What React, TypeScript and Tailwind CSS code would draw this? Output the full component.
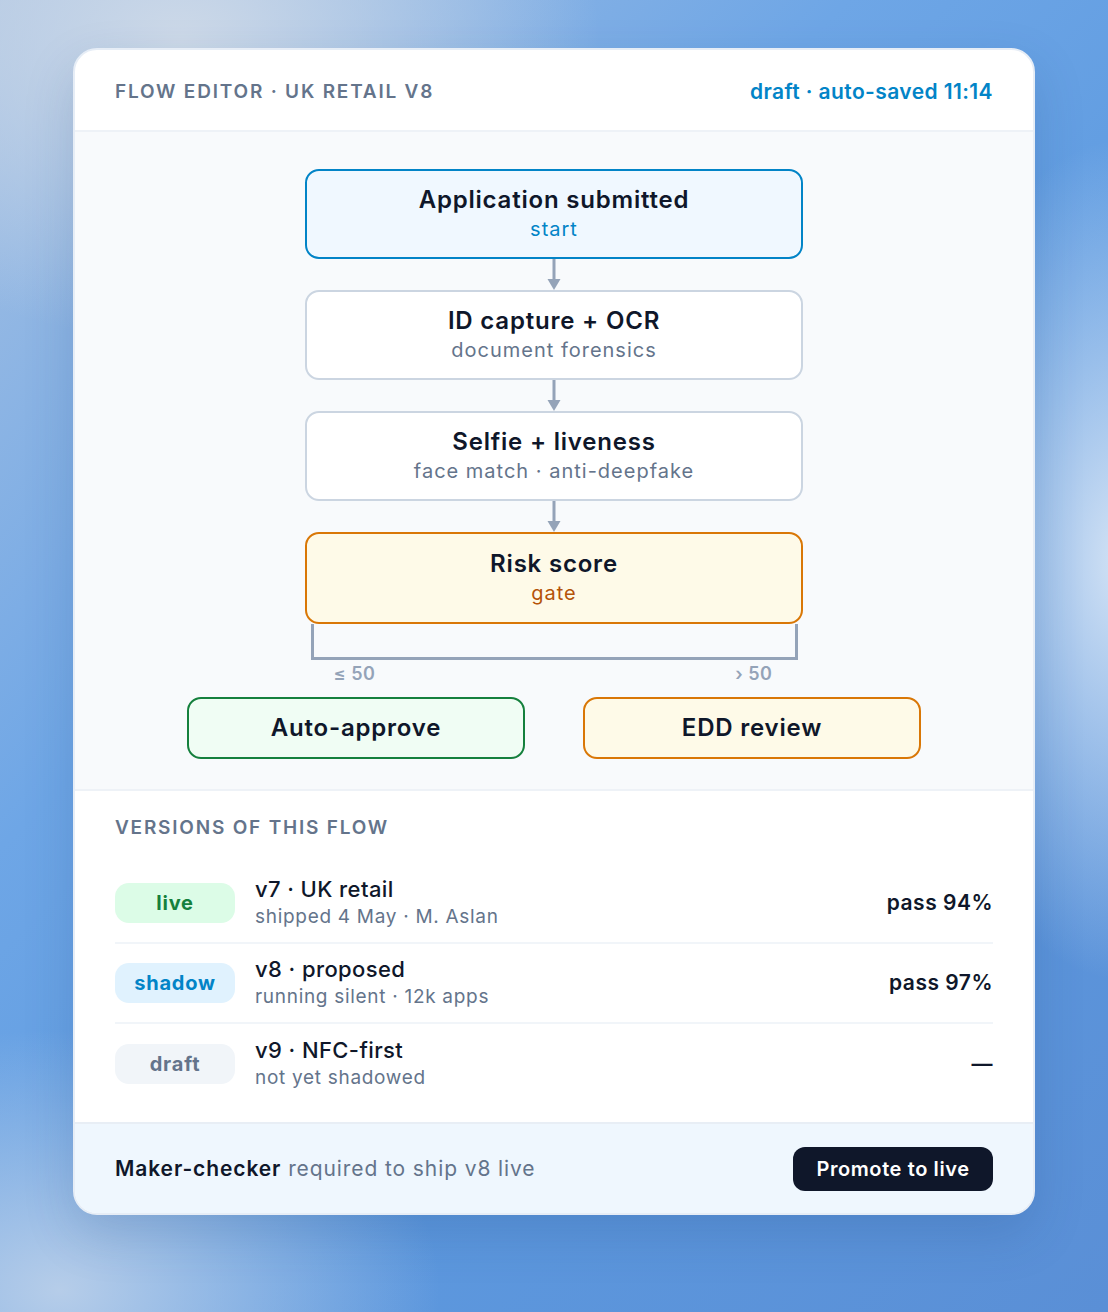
import clsx from 'clsx';

type Tone = 'start' | 'step' | 'gate' | 'pass' | 'review';

const toneStyles: Record<Tone, { box: string; sub: string }> = {
	start: { box: 'border-[#0284c7] bg-[#f0f8ff]', sub: 'text-[#0284c7]' },
	step: { box: 'border-[#cbd5e1] bg-white', sub: 'text-[#64748b]' },
	gate: { box: 'border-[#d97706] bg-[#fefae8]', sub: 'text-[#b45309]' },
	pass: { box: 'border-[#15803d] bg-[#f0fdf4]', sub: '' },
	review: { box: 'border-[#d97706] bg-[#fefae8]', sub: '' },
};

type FlowNodeProps = {
	title: string;
	sub?: string;
	tone: Tone;
	className?: string;
};

const FlowNode = ({ title, sub, tone, className }: FlowNodeProps) => {
	const s = toneStyles[tone];
	return (
		<div
			className={clsx(
				'flex flex-col items-center justify-center rounded-[14px] border-2',
				s.box,
				className,
			)}
		>
			<p className="text-[24px] leading-[30px] font-semibold text-[#0f172a] tracking-[0.8px]">{title}</p>
			{sub && <p className={clsx('text-[20px] leading-[28px] tracking-[1px]', s.sub)}>{sub}</p>}
		</div>
	);
};

const Arrow = () => (
	<svg width="20" height="31" viewBox="0 0 20 31" className="block">
		<line x1="10" y1="0" x2="10" y2="22" stroke="#94a3b8" strokeWidth="3" />
		<path d="M3.5 20 L16.5 20 L10 31 Z" fill="#94a3b8" />
	</svg>
);

type Version = {
	status: string;
	badge: string;
	title: string;
	sub: string;
	metric: string;
};

const versions: Version[] = [
	{
		status: 'live',
		badge: 'bg-[#dcfce7] text-[#15803d]',
		title: 'v7 · UK retail',
		sub: 'shipped 4 May · M. Aslan',
		metric: 'pass 94%',
	},
	{
		status: 'shadow',
		badge: 'bg-[#e0f2fe] text-[#0284c7]',
		title: 'v8 · proposed',
		sub: 'running silent · 12k apps',
		metric: 'pass 97%',
	},
	{
		status: 'draft',
		badge: 'bg-[#f1f5f9] text-[#64748b]',
		title: 'v9 · NFC-first',
		sub: 'not yet shadowed',
		metric: '—',
	},
];

const VersionRow = ({ v, last }: { v: Version; last: boolean }) => (
	<div className={clsx('flex h-20 items-center', !last && 'border-b-2 border-[#f1f5f9]')}>
		<span
			className={clsx(
				'flex h-10 w-[120px] items-center justify-center rounded-[14px] text-[20px] font-bold tracking-[0.8px]',
				v.badge,
			)}
		>
			{v.status}
		</span>
		<div className="ml-5 flex flex-col">
			<p className="text-[22px] leading-[28px] font-medium tracking-[0.4px] text-[#0f172a]">{v.title}</p>
			<p className="text-[19px] leading-[28px] tracking-[0.7px] text-[#64748b]">{v.sub}</p>
		</div>
		<p className="ml-auto text-[21px] font-semibold tracking-[0.5px] text-[#0f172a]">{v.metric}</p>
	</div>
);

export default function App() {
	return (
		<div
			className="min-h-[1312px] w-full pt-12 font-['Inter','Noto_Sans',sans-serif] bg-[radial-gradient(ellipse_420px_300px_at_180px_40px,#cdd9e8,transparent),radial-gradient(ellipse_200px_420px_at_1120px_560px,#d2e2f5,transparent),radial-gradient(ellipse_380px_260px_at_60px_1290px,#b6cde9,transparent),linear-gradient(135deg,#a7c1e2_0%,#6ea6e6_35%,#5d9ae0_60%,#5a8fd6_100%)]"
		>
			<div className="mx-auto w-[962px] overflow-hidden rounded-[24px] border-2 border-[#e6edf6] bg-white shadow-[0_20px_50px_rgba(30,64,120,0.18)]">
				{/* header */}
				<div className="flex h-[82px] items-center justify-between border-b-2 border-[#eef2f7] px-10 pt-1">
					<p className="text-[19px] font-semibold uppercase tracking-[1.8px] text-[#64748b]">
						Flow editor · UK retail v8
					</p>
					<p className="text-[21px] font-semibold tracking-[0.4px] text-[#0284c7]">draft · auto-saved 11:14</p>
				</div>

				{/* flow canvas */}
				<div className="flex flex-col items-center border-b-2 border-[#eef2f7] bg-[#f8fafc] pt-[37px] pb-[30px]">
					<FlowNode title="Application submitted" sub="start" tone="start" className="h-[90px] w-[498px]" />
					<Arrow />
					<FlowNode title="ID capture + OCR" sub="document forensics" tone="step" className="h-[90px] w-[498px]" />
					<Arrow />
					<FlowNode title="Selfie + liveness" sub="face match · anti-deepfake" tone="step" className="h-[90px] w-[498px]" />
					<Arrow />
					<FlowNode title="Risk score" sub="gate" tone="gate" className="h-[92px] w-[498px]" />
					<div className="h-[36px] w-[487px] border-x-[3px] border-b-[3px] border-[#94a3b8]" />
					<div className="mt-[4px] flex w-[487px] justify-between pl-[23px] pr-[25px] text-[18px] leading-[20px] font-semibold tracking-[0.5px] text-[#94a3b8]">
						<span>≤ 50</span>
						<span>› 50</span>
					</div>
					<div className="mt-[13px] flex gap-[58px]">
						<FlowNode title="Auto-approve" tone="pass" className="h-[62px] w-[338px]" />
						<FlowNode title="EDD review" tone="review" className="h-[62px] w-[338px]" />
					</div>
				</div>

				{/* versions */}
				<div className="px-10 pt-[25px] pb-[18px]">
					<p className="text-[19px] leading-[24px] font-semibold uppercase tracking-[1.8px] text-[#64748b]">
						Versions of this flow
					</p>
					<div className="mt-[24px]">
						{versions.map((v, i) => (
							<VersionRow key={v.status} v={v} last={i === versions.length - 1} />
						))}
					</div>
				</div>

				{/* footer */}
				<div className="flex h-[91px] items-center justify-between border-t-2 border-[#e8eef5] bg-[#eff7fe] px-10">
					<p className="text-[21px] tracking-[0.9px] text-[#64748b]">
						<span className="font-semibold text-[#0f172a]">Maker-checker</span> required to ship v8 live
					</p>
					<button className="h-[44px] w-[200px] rounded-[12px] bg-[#0f172a] text-[20px] font-semibold tracking-[0.6px] text-white">
						Promote to live
					</button>
				</div>
			</div>
		</div>
	);
}
